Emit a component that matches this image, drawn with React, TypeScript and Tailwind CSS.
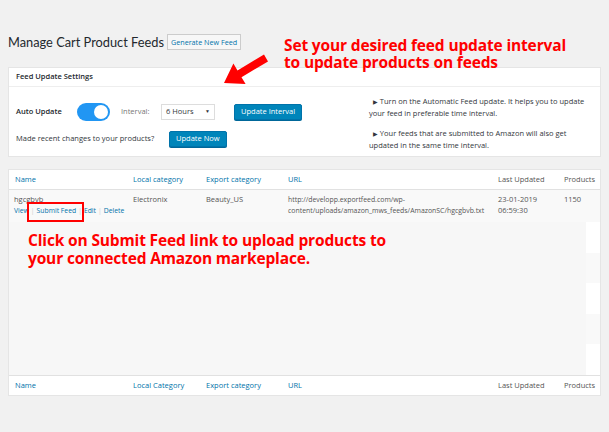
import React from "react";

const cols = "grid grid-cols-[118px_73px_82px_210px_66px_44px]";

const Stripe = ({ white }: { white: boolean }) => (
  <div className={`h-[30.6px] ${white ? "bg-white" : "bg-[#f9f9f9]"}`}></div>
);

const Pipe = () => <span className="mx-[2px] text-[#ccc]">|</span>;

const App = () => {
  return (
    <div className="relative w-[609px] h-[432px] overflow-hidden bg-[#f1f1f1] font-['Open_Sans',sans-serif] text-[#555]">
      {/* title */}
      <div className="flex items-center gap-[3px] px-[8px] pt-[34px]">
        <h1 className="font-['Lato',sans-serif] text-[12.8px] leading-[16px] text-[#23282d]">Manage Cart Product Feeds</h1>
        <span className="h-[16px] px-[3px] flex items-center border border-[#ccc] bg-[#f7f7f7] text-[7.2px] text-[#0073aa]">
          Generate New Feed
        </span>
      </div>

      {/* settings */}
      <div className="mx-[8px] mt-[17px] bg-white border border-[#e5e5e5] h-[90px]">
        <div className="h-[19px] border-b border-[#eee] pl-[7px] flex items-center text-[7.5px] font-semibold text-[#23282d]">
          Feed Update Settings
        </div>
        <div className="flex">
          <div className="w-[354px] pl-[7px] pt-[16px] flex flex-col gap-[10px]">
            <div className="flex items-center h-[18px] text-[7.5px]">
              <span className="w-[61px] font-semibold text-[#23282d]">Auto Update</span>
              <span className="w-[33px] h-[18px] rounded-full bg-[#2196f3] flex items-center justify-end pr-[2px]">
                <span className="w-[14px] h-[14px] rounded-full bg-white"></span>
              </span>
              <span className="ml-[11px] w-[40px] text-[#777]">Interval:</span>
              <span className="w-[54px] h-[16px] border border-[#ddd] flex items-center justify-between px-[4px] text-[#32373c]">
                6 Hours <span className="text-[5px]">▼</span>
              </span>
              <span className="ml-[19px] h-[16px] px-[6px] flex items-center rounded-[2px] bg-[#0085ba] border border-[#0073aa] text-white shadow-[0_1px_0_#006799]">
                Update Interval
              </span>
            </div>
            <div className="flex items-center h-[16px] text-[7.5px]">
              <span className="w-[153px] text-[#32373c]">Made recent changes to your products?</span>
              <span className="h-[16px] px-[6px] flex items-center rounded-[2px] bg-[#0085ba] border border-[#0073aa] text-white shadow-[0_1px_0_#006799]">
                Update Now
              </span>
            </div>
          </div>
          <div className="pl-[6px] pt-[9px] text-[7.5px] leading-[10.5px] text-[#32373c] whitespace-nowrap">
            <p>
              &nbsp;&nbsp;<span className="text-[6px]">▶</span> Turn on the Automatic Feed update. It helps you to update
              <br />
              your feed in preferable time interval.
            </p>
            <p className="mt-[10px]">
              &nbsp;&nbsp;<span className="text-[6px]">▶</span> Your feeds that are submitted to Amazon will also get
              <br />
              updated in the same time interval.
            </p>
          </div>
        </div>
      </div>

      {/* table */}
      <div className="mx-[8px] mt-[12px] bg-white border border-[#e5e5e5] text-[7.5px]">
        <div className={`${cols} h-[20px] items-center border-b border-[#e1e1e1] text-[#0073aa]`}>
          <span className="px-[6px]">Name</span>
          <span className="px-[6px]">Local category</span>
          <span className="px-[6px]">Export category</span>
          <span className="px-[6px]">URL</span>
          <span className="px-[6px] text-[#555]">Last Updated</span>
          <span className="px-[6px] text-[#555]">Products</span>
        </div>
        <div className={`${cols} h-[32px] bg-[#f9f9f9] pt-[4px] leading-[11px] text-[#555]`}>
          <div className="relative px-[5px]">
            <div>hgcgbvb</div>
            <div className="flex whitespace-nowrap text-[6.8px] text-[#0073aa]">
              <span>View</span>
              <Pipe />
              <span>Submit Feed</span>
              <Pipe />
              <span>Edit</span>
              <Pipe />
              <span>Delete</span>
            </div>
            <div className="absolute left-[18px] top-[8px] w-[57px] h-[20px] border-[2px] border-[#ff0000]"></div>
          </div>
          <span className="px-[6px]">Electronix</span>
          <span className="px-[6px]">Beauty_US</span>
          <span className="px-[6px] whitespace-nowrap text-[6.9px]">
            http://developp.exportfeed.com/wp-
            <br />
            content/uploads/amazon_mws_feeds/AmazonSC/hgcgbvb.txt
          </span>
          <span className="px-[6px]">
            23-01-2019
            <br />
            06:59:30
          </span>
          <span className="px-[6px]">1150</span>
        </div>
        <div className="flex h-[153px]">
          <div className="flex-1 bg-[#f7f7f7] pl-[19px] pt-[9px]">
            <p className="text-[15.5px] leading-[18px] font-bold text-[#ff0000] whitespace-nowrap tracking-[-0.15px]">
              Click on Submit Feed link to upload products to
              <br />
              your connected Amazon markeplace.
            </p>
          </div>
          <div className="w-[14px] flex flex-col">
            <Stripe white />
            <Stripe white={false} />
            <Stripe white />
            <Stripe white={false} />
            <Stripe white />
          </div>
        </div>
        <div className={`${cols} h-[20px] items-center border-t border-[#e1e1e1] text-[#0073aa]`}>
          <span className="px-[6px]">Name</span>
          <span className="px-[6px]">Local Category</span>
          <span className="px-[6px]">Export category</span>
          <span className="px-[6px]">URL</span>
          <span className="px-[6px] text-[#555]">Last Updated</span>
          <span className="px-[6px] text-[#555]">Products</span>
        </div>
      </div>

      {/* annotation over the header */}
      <p className="absolute left-[284px] top-[37px] text-[15.5px] leading-[17px] font-bold text-[#ff0000] whitespace-nowrap tracking-[-0.15px]">
        Set your desired feed update interval
        <br />
        to update products on feeds
      </p>
      <svg className="absolute left-[220px] top-[50px]" width="52" height="36" viewBox="0 0 52 36">
        <polygon
          points="44,4.6 17.5,20.4 13.4,13.5 4,33 25.6,34.1 21.5,27.2 48,11.4"
          fill="#ff0000"
        />
      </svg>
    </div>
  );
};

export default App;
